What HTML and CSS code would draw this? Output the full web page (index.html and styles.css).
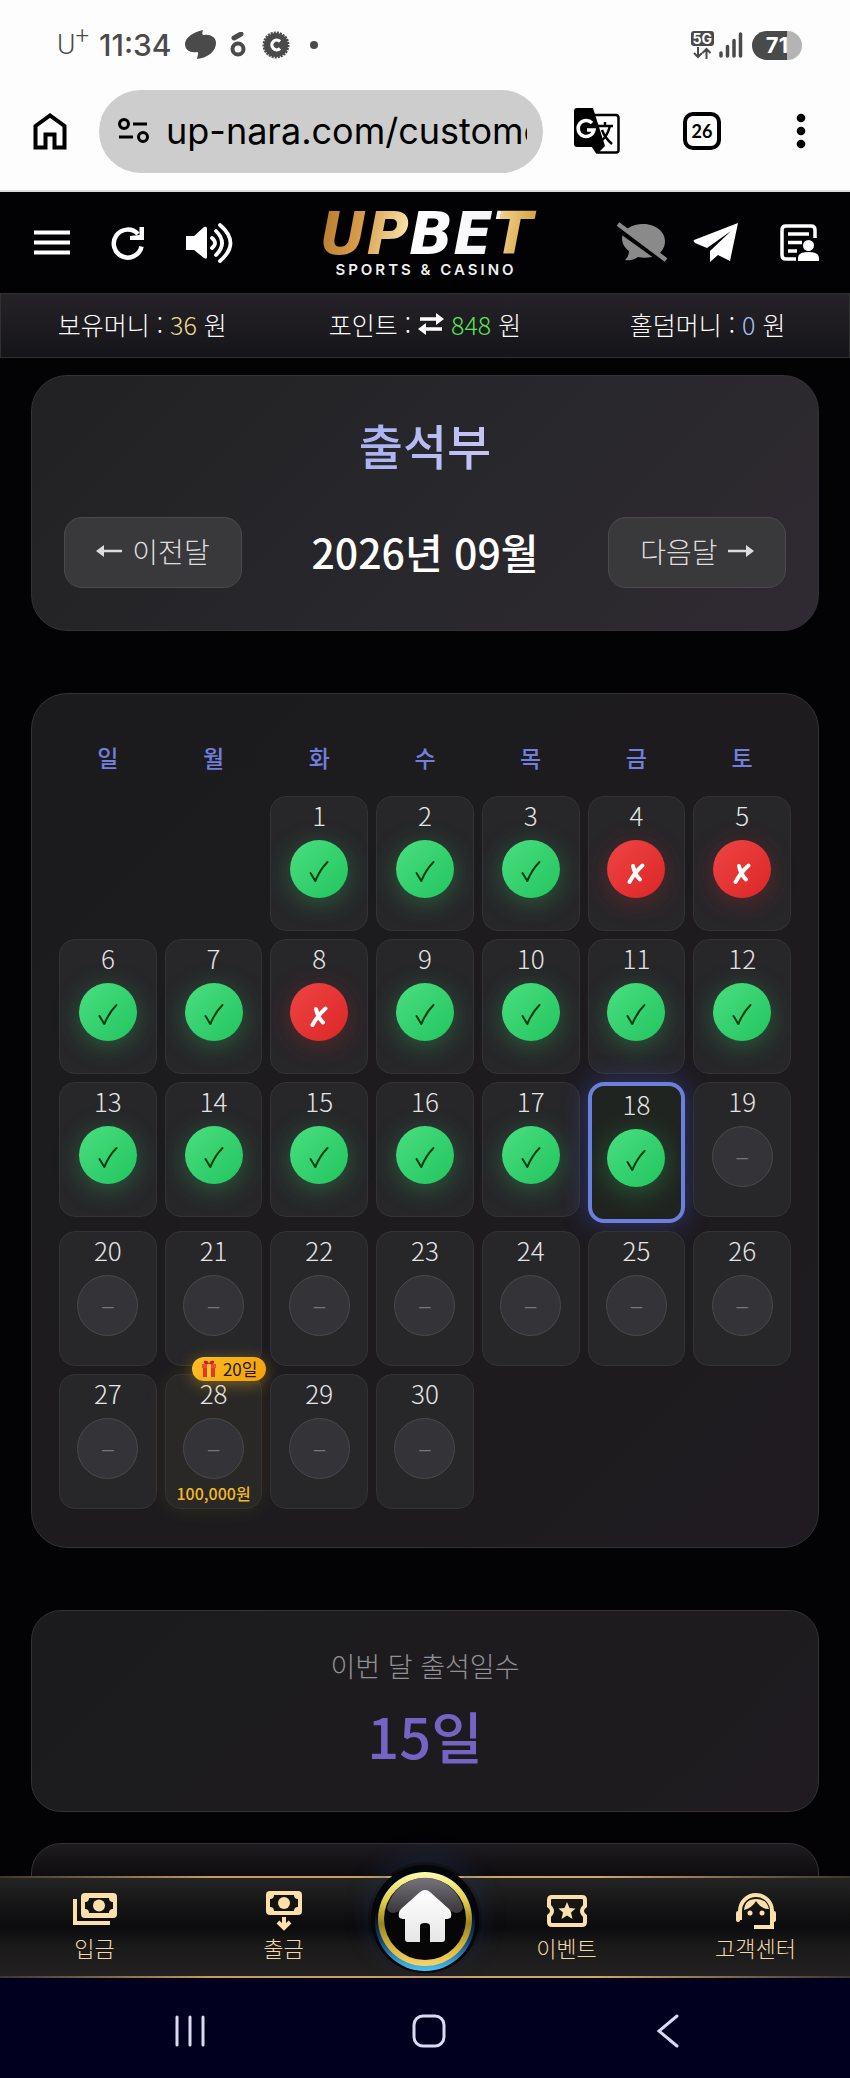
FILE: index.html
```
<!DOCTYPE html>
<html lang="ko">
<head>
    <meta charset="UTF-8">
    <meta name="viewport" content="width=device-width, initial-scale=1.0">
    <title>출석부</title>
    <link rel="stylesheet" href="styles.css">
</head>
<body>
    <svg width="0" height="0" class="sprite" aria-hidden="true">
        <symbol id="ok" viewBox="0 0 58 58">
            <path d="M20.500 33l4.800 8Q30 29.500 37.500 22" fill="none" stroke="#063d12" stroke-width="2" stroke-linecap="round" stroke-linejoin="round"/>
        </symbol>
        <symbol id="no" viewBox="0 0 58 58">
            <path d="M22.500 42Q28 32 35.500 25.500M26 26Q28 35 33 39.500" fill="none" stroke="#fff" stroke-width="4" stroke-linecap="round"/>
        </symbol>
    </svg>

    <!-- estado -->
    <div class="status">
        <span class="carrier">U<sup>+</sup></span>
        <span class="time">11:34</span>
        <svg class="st-swirl" width="32" height="30" viewBox="0 0 32 30"><path d="M18 0C8 2 0 8 0 14c0 6 5 9 12 8 2 0 1 3 0 7 11-1 19-8 19-16 0-6-6-9-12-8-2 0-2-2-1-5z" fill="#4a4a4a"/></svg>
        <svg class="st-six" width="16" height="26" viewBox="0 0 16 26"><circle cx="8" cy="17" r="5.500" fill="none" stroke="#4a4a4a" stroke-width="4"/><path d="M4 6l7-4" stroke="#4a4a4a" stroke-width="5" stroke-linecap="round"/></svg>
        <svg width="28" height="28" viewBox="0 0 28 28"><circle cx="14" cy="14" r="12" fill="#4a4a4a"/><circle cx="14" cy="14" r="12" fill="none" stroke="#4a4a4a" stroke-width="3" stroke-dasharray="2 1"/><path d="M18 10.500a4.800 4.800 0 1 0 0 7" fill="none" stroke="#fff" stroke-width="3.200"/></svg>
        <span class="dot"></span>
        <div class="status-right">
            <div class="net">
                <span class="g5">5G</span>
                <svg width="20" height="12" viewBox="0 0 20 12"><path d="M6 0v10M2 6l4 4 4-4M14.500 12V2M10.500 6l4-4 4 4" fill="none" stroke="#4a4a4a" stroke-width="2"/></svg>
            </div>
            <svg width="24" height="28" viewBox="0 0 24 28"><path d="M2 22v3M8.500 15.500V25M15 9.500V25M21.500 3v22" stroke="#4a4a4a" stroke-width="3.500" stroke-linecap="round"/></svg>
            <span class="battery">71</span>
        </div>
    </div>

    <!-- navegador -->
    <div class="browser">
        <button class="icon" aria-label="홈">
            <svg width="40" height="40" viewBox="0 0 40 40"><path d="M5.500 15L20 4.500 34.500 15v21.500h-10V23.500h-9v13h-10z" fill="none" stroke="#000" stroke-width="4"/></svg>
        </button>
        <div class="url">
            <svg width="34" height="30" viewBox="0 0 34 30"><g fill="none" stroke="#000" stroke-width="3"><circle cx="8" cy="8" r="4.500"/><circle cx="27" cy="21" r="4.500"/><path d="M17 8h14M3 21h14"/></g></svg>
            <input type="text" value="up-nara.com/customer" aria-label="주소">
        </div>
        <div class="browser-actions">
            <button class="icon" aria-label="번역">
                <svg width="46" height="46" viewBox="0 0 46 46">
                    <path d="M20 7h22q2.500 0 2.500 3v32q0 2.500-2.500 2.500H23l-4-6" fill="#fff" stroke="#000" stroke-width="2.500"/>
                    <path d="M3 0h16l12 38-7 7-4-6H3q-3 0-3-3V3q0-3 3-3z"/>
                    <path d="M18 15a8 8 0 1 0 2 7h-7" fill="none" stroke="#fff" stroke-width="3.500"/>
                    <path d="M24 18h15M31 14v4M36 18q-3 11-9 15M28 22q3 8 10 14" fill="none" stroke="#000" stroke-width="2.500"/>
                </svg>
            </button>
            <button class="tabs" aria-label="탭 26개">26</button>
            <button class="icon more" aria-label="메뉴">
                <svg width="10" height="36" viewBox="0 0 10 36"><circle cx="5" cy="5" r="4.300"/><circle cx="5" cy="18" r="4.300"/><circle cx="5" cy="31" r="4.300"/></svg>
            </button>
        </div>
    </div>

    <header class="header">
        <div class="header-left">
            <button class="icon" aria-label="전체메뉴">
                <svg width="40" height="40" viewBox="0 0 40 40"><path d="M2 9.500h36M2 19.500h36M2 29.500h36" stroke="#fff" stroke-width="4"/></svg>
            </button>
            <button class="icon" aria-label="새로고침">
                <svg width="36" height="36" viewBox="0 0 36 36"><path d="M31.500 21.500A14 14 0 1 1 28 9" fill="none" stroke="#fff" stroke-width="4.500"/><path d="M34 2v13H20v-4l9.500-1V2z" fill="#fff"/></svg>
            </button>
            <button class="icon" aria-label="소리">
                <svg width="50" height="42" viewBox="0 0 50 42"><path d="M2 14h8L20 5q3-1 3 2v28q0 3-3 1L10 28H2z" fill="#fff"/><path d="M28 16q6 5 0 10M32 9q12 12 0 24M36 3q21 18 0 36" fill="none" stroke="#fff" stroke-width="3.800" stroke-linecap="round"/></svg>
            </button>
        </div>
        <a href="#" class="logo">
            <span class="logo-name">UPBET</span>
            <span class="logo-sub">SPORTS &amp; CASINO</span>
        </a>
        <div class="header-right">
            <button class="icon" aria-label="채팅 끄기">
                <svg width="54" height="44" viewBox="0 0 54 44"><path d="M28 3c12 0 22 7 22 17 0 8-5 14-13 16-5 1-10 1-14 0-3 2-7 4-13 3 3-3 4-6 4-9-5-4-7-8-7-13C7 9 17 3 28 3z" fill="#8a8a8a"/><path d="M5 9l46 33" stroke="#000" stroke-width="6"/><path d="M3 3l48 36" stroke="#8a8a8a" stroke-width="4.500"/></svg>
            </button>
            <button class="icon telegram" aria-label="텔레그램">
                <svg width="46" height="42" viewBox="0 0 46 42"><path d="M1 18L45 1l-8 38-12-6-8 7v-11L38 9 14 26 2 21q-2-2-1-3z" fill="#fff"/></svg>
            </button>
            <button class="icon notes" aria-label="문의 내역">
                <svg width="41" height="40" viewBox="0 0 41 40"><path d="M17 36H7q-4 0-4-4V7q0-4 4-4h25q4 0 4 4v8M9 11h21M9 19.500h14M9 28h9" fill="none" stroke="#fff" stroke-width="3.500"/><circle cx="29.500" cy="22.500" r="5.500" fill="#fff"/><path d="M19 38v-3q0-6 10.500-6T40 35v3z" fill="#fff"/></svg>
            </button>
        </div>
    </header>

    <div class="money">
        <div>보유머니 : <span class="cash">36</span> 원</div>
        <div>포인트 : <svg width="26" height="22" viewBox="0 0 26 22"><path d="M2 6h18M24 16H6" stroke="#fff" stroke-width="3.500"/><path d="M18 0l8 6-8 6zM8 10l-8 6 8 6z" fill="#fff"/></svg> <span class="point">848</span> 원</div>
        <div>홀덤머니 : <span class="holdem">0</span> 원</div>
    </div>

    <main>
        <section class="card head-card">
            <h1>출석부</h1>
            <div class="month-nav">
                <button class="month-btn"><svg width="26" height="16" viewBox="0 0 26 16"><path d="M5 8h21" stroke="#ddd" stroke-width="2.500"/><path d="M0 8l8-6v12z" fill="#ddd"/></svg>이전달</button>
                <h2>2026년 09월</h2>
                <button class="month-btn">다음달<svg width="26" height="16" viewBox="0 0 26 16"><path d="M0 8h21" stroke="#ddd" stroke-width="2.500"/><path d="M26 8l-8-6v12z" fill="#ddd"/></svg></button>
            </div>
        </section>

        <section class="card calendar">
            <div class="week">
                <span>일</span><span>월</span><span>화</span><span>수</span><span>목</span><span>금</span><span>토</span>
            </div>
            <div class="days">
                <!-- semana 1 -->
                <div class="blank"></div>
                <div class="blank"></div>
                <div class="day"><span class="num">1</span><span class="mark ok"><svg><use href="#ok"/></svg></span></div>
                <div class="day"><span class="num">2</span><span class="mark ok"><svg><use href="#ok"/></svg></span></div>
                <div class="day"><span class="num">3</span><span class="mark ok"><svg><use href="#ok"/></svg></span></div>
                <div class="day"><span class="num">4</span><span class="mark no"><svg><use href="#no"/></svg></span></div>
                <div class="day"><span class="num">5</span><span class="mark no"><svg><use href="#no"/></svg></span></div>
                <!-- semana 2 -->
                <div class="day"><span class="num">6</span><span class="mark ok"><svg><use href="#ok"/></svg></span></div>
                <div class="day"><span class="num">7</span><span class="mark ok"><svg><use href="#ok"/></svg></span></div>
                <div class="day"><span class="num">8</span><span class="mark no"><svg><use href="#no"/></svg></span></div>
                <div class="day"><span class="num">9</span><span class="mark ok"><svg><use href="#ok"/></svg></span></div>
                <div class="day"><span class="num">10</span><span class="mark ok"><svg><use href="#ok"/></svg></span></div>
                <div class="day"><span class="num">11</span><span class="mark ok"><svg><use href="#ok"/></svg></span></div>
                <div class="day"><span class="num">12</span><span class="mark ok"><svg><use href="#ok"/></svg></span></div>
                <!-- semana 3 -->
                <div class="day"><span class="num">13</span><span class="mark ok"><svg><use href="#ok"/></svg></span></div>
                <div class="day"><span class="num">14</span><span class="mark ok"><svg><use href="#ok"/></svg></span></div>
                <div class="day"><span class="num">15</span><span class="mark ok"><svg><use href="#ok"/></svg></span></div>
                <div class="day"><span class="num">16</span><span class="mark ok"><svg><use href="#ok"/></svg></span></div>
                <div class="day"><span class="num">17</span><span class="mark ok"><svg><use href="#ok"/></svg></span></div>
                <div class="day today"><span class="num">18</span><span class="mark ok"><svg><use href="#ok"/></svg></span></div>
                <div class="day"><span class="num">19</span><span class="mark wait">–</span></div>
                <!-- semana 4 -->
                <div class="day"><span class="num">20</span><span class="mark wait">–</span></div>
                <div class="day"><span class="num">21</span><span class="mark wait">–</span></div>
                <div class="day"><span class="num">22</span><span class="mark wait">–</span></div>
                <div class="day"><span class="num">23</span><span class="mark wait">–</span></div>
                <div class="day"><span class="num">24</span><span class="mark wait">–</span></div>
                <div class="day"><span class="num">25</span><span class="mark wait">–</span></div>
                <div class="day"><span class="num">26</span><span class="mark wait">–</span></div>
                <!-- semana 5 -->
                <div class="day"><span class="num">27</span><span class="mark wait">–</span></div>
                <div class="day bonus">
                    <span class="badge"><svg width="16" height="18" viewBox="0 0 16 18"><path d="M2 7h12v10H2z" fill="#e8352c"/><path d="M1 4h14v4H1z" fill="#f0483c"/><path d="M6 4h4v13H6z" fill="#ffc62e"/><path d="M8 4Q2 5 3 1q4-1 5 3 1-4 5-3 1 4-5 3z" fill="#c71f2b"/></svg>20일</span>
                    <span class="num">28</span><span class="mark wait">–</span>
                    <span class="reward">100,000원</span>
                </div>
                <div class="day"><span class="num">29</span><span class="mark wait">–</span></div>
                <div class="day"><span class="num">30</span><span class="mark wait">–</span></div>
            </div>
        </section>

        <section class="card stat">
            <div class="stat-label">이번 달 출석일수</div>
            <div class="stat-value">15일</div>
        </section>

        <section class="card stat next"></section>
    </main>

    <nav class="bottom">
        <a href="#">
            <svg width="46" height="40" viewBox="0 0 46 40"><path d="M3 8v24h35" fill="none" stroke="#fbe0ac" stroke-width="4"/><rect x="9" y="2" width="36" height="25" rx="4" fill="#fbe0ac"/><path d="M17 7h20q0 4 4 4v7q-4 0-4 4H17q0-4-4-4v-7q4 0 4-4z" fill="#15130f"/><circle cx="27" cy="14.500" r="6" fill="#fbe0ac"/></svg>
            입금
        </a>
        <a href="#">
            <svg width="46" height="40" viewBox="0 0 46 40"><rect x="5" y="0" width="36" height="24" rx="4" fill="#fbe0ac"/><path d="M13 4h20q0 4 4 4v8q-4 0-4 4H13q0-4-4-4V8q4 0 4-4z" fill="#15130f"/><circle cx="23" cy="12" r="6" fill="#fbe0ac"/><path d="M23 26v9M17 31l6 6 6-6" fill="none" stroke="#fbe0ac" stroke-width="4"/></svg>
            출금
        </a>
        <a href="#" class="home" aria-label="홈">
            <svg width="112" height="114" viewBox="0 0 112 114">
                <defs>
                    <linearGradient id="ring" x1="0" y1="0" x2="0" y2="1"><stop offset="0" stop-color="#fffcb0"/><stop offset=".3" stop-color="#e2cf50"/><stop offset=".55" stop-color="#9a8420"/><stop offset=".8" stop-color="#d9b63c"/><stop offset="1" stop-color="#f6d468"/></linearGradient>
                    <linearGradient id="shine" x1="0" y1="0" x2="0" y2="1"><stop offset="0" stop-color="#77737a"/><stop offset="1" stop-color="#38363b"/></linearGradient>
                    <linearGradient id="blue" x1="0" y1="0" x2="0" y2="1"><stop offset=".4" stop-color="#02080f"/><stop offset=".7" stop-color="#12457c"/><stop offset="1" stop-color="#49c4f2"/></linearGradient>
                    <linearGradient id="house" x1="0" y1="0" x2="0" y2="1"><stop offset="0" stop-color="#fff"/><stop offset="1" stop-color="#e6e6e6"/></linearGradient>
                </defs>
                <circle cx="56" cy="57" r="54" fill="#02060d"/>
                <circle cx="56" cy="59" r="50" fill="url(#blue)"/>
                <circle cx="56" cy="57" r="47" fill="url(#ring)"/>
                <circle cx="56" cy="57" r="41" fill="#060606"/>
                <path d="M18 46A39 39 0 0 1 94 46Q91 53 84 50 56 38 28 50 20 53 18 46z" fill="url(#shine)"/>
                <path d="M56 28q3 0 5 2l19 17q3 3 2 8-1 2-6 2v20q0 3-3 3H61V64q0-3-5-3t-5 3v16H39q-3 0-3-3V57q-5 0-6-2-1-5 2-8l19-17q2-2 5-2z" fill="url(#house)"/>
            </svg>
        </a>
        <a href="#">
            <svg width="46" height="40" viewBox="0 0 46 40"><path d="M8 6h30q3 0 3 3v6q-6 5 0 10v6q0 3-3 3H8q-3 0-3-3v-6q6-5 0-10V9q0-3 3-3z" fill="none" stroke="#fbe0ac" stroke-width="4"/><path d="M23 11l2.500 6 6 .500-4.500 4 1.500 6.500L23 24.500 17.500 28l1.500-6.500-4.500-4 6-.500z" fill="#fbe0ac"/></svg>
            이벤트
        </a>
        <a href="#">
            <svg width="46" height="40" viewBox="0 0 46 40"><path d="M7 29V20a16 16 0 0 1 32 0v16H21" fill="none" stroke="#fbe0ac" stroke-width="4"/><path d="M5 22v7M41 22v7" stroke="#fbe0ac" stroke-width="4" stroke-linecap="round"/><path d="M11 19Q12 8 23 8q11 0 13 10-8 0-13-8-4 7-12 9z" fill="#fbe0ac"/><circle cx="17" cy="22" r="2.500" fill="#fbe0ac"/><circle cx="29" cy="22" r="2.500" fill="#fbe0ac"/></svg>
            고객센터
        </a>
    </nav>

    <div class="system">
        <button class="icon" aria-label="최근 앱"><svg width="34" height="34" viewBox="0 0 34 34"><path d="M4 3v28M17 3v28M30 3v28" stroke="#dcd9f2" stroke-width="3" stroke-linecap="round"/></svg></button>
        <button class="icon" aria-label="홈 화면"><svg width="36" height="34" viewBox="0 0 36 34"><rect x="3" y="2" width="30" height="30" rx="9" fill="none" stroke="#dcd9f2" stroke-width="3"/></svg></button>
        <button class="icon" aria-label="뒤로"><svg width="34" height="34" viewBox="0 0 34 34"><path d="M27 2L9 17l18 15" fill="none" stroke="#dcd9f2" stroke-width="3" stroke-linecap="round"/></svg></button>
    </div>
</body>
</html>
```
FILE: styles.css
```
* {
    box-sizing: border-box;
}
body {
    margin: 0;
    height: 100vh;
    display: flex;
    flex-direction: column;
    overflow: hidden;
    background-color: #030205;
    color: white;
    font-family: "Noto Sans CJK KR", sans-serif;
    font-weight: 300;
}
svg {
    display: block;
    flex-shrink: 0;
}
.sprite {
    position: absolute;
}
a {
    color: inherit;
    text-decoration: none;
}
button, input {
    font-family: inherit;
    font-weight: inherit;
    color: inherit;
}
.icon {
    display: flex;
    align-items: center;
    justify-content: center;
    padding: 0;
    border: 0;
    background: none;
    cursor: pointer;
}

/* estado */
.status {
    display: flex;
    align-items: center;
    height: 90px;
    padding: 0 48px 0 57px;
    background-color: #fdfdfd;
    color: #4a4a4a;
    font-family: Inter, sans-serif;
}
.carrier {
    font-size: 28px;
    line-height: 32px;
    font-family: Roboto, sans-serif;
}
.carrier sup {
    font-size: 24px;
    line-height: 0;
}
.time {
    margin: 0 14px 0 10px;
    font-size: 30px;
    font-weight: 500;
}
.st-six {
    margin: 0 16px 0 13px;
}
.dot {
    width: 8px;
    height: 8px;
    margin-left: 20px;
    border-radius: 50%;
    background-color: #4a4a4a;
}
.status-right {
    display: flex;
    align-items: center;
    gap: 5px;
    margin-left: auto;
}
.net {
    display: flex;
    flex-direction: column;
    align-items: center;
    gap: 1px;
}
.g5 {
    padding: 0 2px;
    border-radius: 3px;
    background-color: #4a4a4a;
    color: white;
    font-size: 14px;
    line-height: 15px;
    font-weight: 700;
}
.battery {
    width: 50px;
    margin-left: 4px;
    border-radius: 15px;
    background: linear-gradient(90deg, #4a4a4a 70%, #b4b4b4 70%);
    color: white;
    text-align: center;
    font-size: 22px;
    line-height: 29px;
    font-weight: 700;
}

/* navegador */
.browser {
    display: flex;
    align-items: center;
    height: 102px;
    padding: 0 32px 18px 30px;
    border-bottom: 2px solid #ddd;
    background-color: #fdfdfd;
    color: black;
}
.url {
    flex: 1;
    min-width: 0;
    display: flex;
    align-items: center;
    gap: 16px;
    height: 83px;
    margin: 0 31px 0 29px;
    padding: 0 16px 0 17px;
    border-radius: 42px;
    background-color: #cdcdcd;
}
.url input {
    flex: 1;
    min-width: 0;
    padding: 0;
    border: 0;
    outline: none;
    background: none;
    font-family: Inter, sans-serif;
    font-size: 36px;
    font-weight: 400;
}
.browser-actions {
    display: flex;
    align-items: center;
    gap: 63px;
}
.tabs {
    width: 38px;
    height: 38px;
    padding: 0;
    border: 4px solid black;
    border-radius: 10px;
    background: none;
    font-family: Lato, sans-serif;
    font-size: 18px;
    font-weight: 700;
}
.more {
    width: 34px;
}

/* cabecera */
.header {
    display: grid;
    grid-template-columns: 1fr auto 1fr;
    align-items: center;
    height: 101px;
    padding: 0 30px 0 32px;
    background-color: #020103;
}
.header-left, .header-right {
    display: flex;
    align-items: center;
}
.header-left {
    gap: 38px;
}
.header-right {
    justify-content: flex-end;
}
.telegram {
    margin-left: 24px;
}
.notes {
    margin-left: 40px;
}
.logo {
    display: flex;
    flex-direction: column;
    align-items: center;
    font-family: Inter, sans-serif;
}
.logo-name {
    padding: 0 4px;
    background: linear-gradient(102deg, #b0742a, #d99f4c 22%, #fbe7b0 43%, #fff 43%, #f4f4f4 80%, #f3cf8e 80%, #c99a2d);
    -webkit-background-clip: text;
    background-clip: text;
    color: transparent;
    font-family: "DejaVu Sans", sans-serif;
    font-size: 58px;
    line-height: 54px;
    font-weight: 700;
    font-style: italic;
}
.logo-sub {
    font-size: 15px;
    line-height: 18px;
    font-weight: 600;
    letter-spacing: 3px;
    color: #eee;
}
.money {
    display: grid;
    grid-template-columns: repeat(3, 1fr);
    height: 65px;
    padding-bottom: 4px;
    border: 1px solid #303033;
    background: linear-gradient(#252327, #151418);
    font-size: 25px;
    line-height: 56px;
}
.money div {
    display: flex;
    justify-content: center;
    align-items: center;
    gap: 7px;
}
.cash {
    color: #f2dc91;
}
.point {
    color: #5be45b;
}
.holdem {
    color: #a3c4f5;
}

main {
    flex: 1;
    min-height: 0;
    padding: 17px 31px 0;
    overflow: hidden;
}
.card {
    border: 1px solid #333236;
    border-radius: 36px;
    background: linear-gradient(135deg, #1b1b1d, #1f1b20);
}
.head-card {
    padding: 42px 32px;
    background: linear-gradient(135deg, #212023, #29282c 60%, #302a32);
}
h1, h2 {
    margin: 0;
    text-align: center;
    font-weight: 500;
}
h1 {
    margin-bottom: 47px;
    font-size: 48px;
    line-height: 52px;
    background: linear-gradient(90deg, #a5b0f2 40%, #c9c6f4 60%);
    -webkit-background-clip: text;
    background-clip: text;
    color: transparent;
}
h2 {
    padding-bottom: 4px;
    font-size: 41px;
    line-height: 56px;
}
.month-nav {
    display: flex;
    align-items: center;
    justify-content: space-between;
}
.month-btn {
    display: flex;
    align-items: center;
    justify-content: center;
    gap: 10px;
    width: 178px;
    height: 71px;
    padding: 0 0 3px;
    border: 1px solid #4b4a4e;
    border-radius: 18px;
    background-color: #39383b;
    color: #ddd;
    font-size: 28px;
    cursor: pointer;
}

/* calendario */
.calendar {
    margin-top: 62px;
    padding: 27px 27px 38px;
}
.week, .days {
    display: grid;
    grid-template-columns: repeat(7, 1fr);
    gap: 8px;
}
.week {
    padding-bottom: 3px;
    color: #727fdc;
    text-align: center;
    font-size: 23px;
    line-height: 72px;
    font-weight: 500;
}
.days {
    align-items: start;
}
.day {
    position: relative;
    display: flex;
    flex-direction: column;
    align-items: center;
    height: 135px;
    padding-top: 4px;
    border: 1px solid #333336;
    border-radius: 16px;
    background-color: #272629;
}
.num {
    margin-bottom: 11px;
    color: #e4e4e4;
    font-size: 26px;
    line-height: 28px;
}
.mark {
    display: flex;
    align-items: center;
    justify-content: center;
    width: 58px;
    height: 58px;
    border-radius: 50%;
}
.mark svg {
    width: 58px;
    height: 58px;
}
.ok {
    background: linear-gradient(135deg, #4ade80, #22c55e);
    box-shadow: 0 5px 26px rgba(46, 204, 104, 0.35);
}
.no {
    background: linear-gradient(135deg, #ef4444, #dc2626);
    box-shadow: 0 5px 26px rgba(230, 50, 50, 0.25);
}
.wait {
    width: 61px;
    height: 61px;
    padding-bottom: 4px;
    border: 1px solid #49484c;
    background-color: #343337;
    color: #77777a;
    font-size: 26px;
}
.today {
    height: 141px;
    border: 4px solid #6b7fdc;
    background-color: #202420;
    box-shadow: 0 0 26px rgba(80, 100, 240, 0.4);
}
.bonus {
    background-color: #292826;
    box-shadow: 0 0 20px rgba(220, 190, 30, 0.1);
}
.badge {
    position: absolute;
    top: -18px;
    right: -5px;
    display: flex;
    align-items: center;
    gap: 6px;
    padding: 0 9px;
    border-radius: 12px;
    background: linear-gradient(135deg, #fbbf24, #f59e0b);
    box-shadow: 0 3px 16px rgba(251, 191, 36, 0.4);
    color: #221a08;
    font-size: 17px;
    line-height: 24px;
    font-weight: 400;
}
.reward {
    margin-top: 4px;
    color: #f2b928;
    font-size: 16px;
    line-height: 20px;
    font-weight: 500;
}

.stat {
    margin-top: 62px;
    padding: 40px 20px 38px;
    border-radius: 30px;
    text-align: center;
}
.stat-label {
    color: #929195;
    font-size: 27px;
    line-height: 30px;
}
.stat-value {
    margin-top: 16px;
    color: #7465c4;
    font-size: 56px;
    line-height: 76px;
    font-weight: 500;
}
.next {
    height: 200px;
    margin-top: 31px;
    background: linear-gradient(#1f1c21, #0c0b0d 34px);
}

/* menu inferior */
.bottom {
    display: grid;
    grid-template-columns: 1fr 1fr 94px 1fr 1fr;
    height: 102px;
    border-top: 2px solid;
    border-bottom: 2px solid;
    border-image: linear-gradient(90deg, #3a3530, #c89b5c 25%, #d3a66a 70%, #3a3530) 1;
    background: linear-gradient(#242424, #0b0a0c 50%, #1b1a1b 70%, #222020);
    color: #f3d8a6;
    font-size: 22px;
    line-height: 26px;
}
.bottom a {
    display: flex;
    flex-direction: column;
    align-items: center;
    gap: 3px;
    padding-top: 13px;
}
.bottom .home {
    padding: 0;
    margin: -16px -10px 0;
    height: 114px;
    border-radius: 50%;
    box-shadow: 0 -6px 24px rgba(30, 60, 120, 0.3);
}
.system {
    display: flex;
    justify-content: space-between;
    align-items: center;
    height: 100px;
    padding: 5px 166px 0 173px;
    background-color: #02001f;
}
```
